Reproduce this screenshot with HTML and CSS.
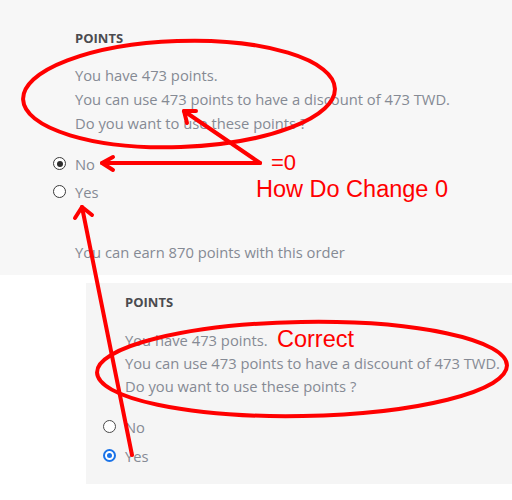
FILE: index.html
```html
<!DOCTYPE html>
<html>
<head>
<meta charset="utf-8">
<link rel="stylesheet" href="styles.css">
</head>
<body>
<div class="page">
  <section class="panel panel-top">
    <h3 class="title">Points</h3>
    <div class="info">
      <p>You have 473 points.</p>
      <p>You can use 473 points to have a discount of 473 TWD.</p>
      <p>Do you want to use these points ?</p>
    </div>
    <div class="choices">
      <label class="choice"><span class="radio radio-dark checked"></span>No</label>
      <label class="choice"><span class="radio radio-dark"></span>Yes</label>
    </div>
    <p class="earn">You can earn 870 points with this order</p>
  </section>

  <section class="panel panel-bottom">
    <h3 class="title">Points</h3>
    <div class="info">
      <p>You have 473 points.</p>
      <p>You can use 473 points to have a discount of 473 TWD.</p>
      <p>Do you want to use these points ?</p>
    </div>
    <div class="choices">
      <label class="choice"><span class="radio radio-blue"></span>No</label>
      <label class="choice"><span class="radio radio-blue checked"></span>Yes</label>
    </div>
  </section>

  <svg class="marks" width="512" height="500" viewBox="0 0 512 500">
    <g fill="none" stroke="#ff0000" stroke-width="4" stroke-linecap="round" stroke-linejoin="round">
      <ellipse cx="179" cy="94" rx="156" ry="53" transform="rotate(-2 179 94)"/>
      <ellipse cx="302" cy="369" rx="205" ry="47" transform="rotate(-1 302 369)"/>
      <path d="M260 163 L102 163"/>
      <path d="M113 157 L102 163 L113 170"/>
      <path d="M260 163 L184 111"/>
      <path d="M196 111 L184 111 L187 123"/>
      <path d="M132 455 L82 207"/>
      <path d="M75 218 L82 207 L92 215"/>
    </g>
    <g class="note">
      <text x="271" y="170" font-size="22">=0</text>
      <text x="256" y="197" font-size="23.5">How Do Change 0</text>
      <text x="277" y="347" font-size="23.5">Correct</text>
    </g>
  </svg>
</div>
</body>
</html>
```

FILE: styles.css
```css
html, body {
  margin: 0;
  padding: 0;
  background: #ffffff;
}

.page {
  position: relative;
  width: 512px;
  height: 500px;
  overflow: hidden;
  font-family: "Open Sans", "DejaVu Sans", sans-serif;
}

.panel {
  box-sizing: border-box;
  display: flex;
  flex-direction: column;
}

.panel-top {
  background: #f7f7f7;
  height: 275px;
  padding: 30px 0 0 75px;
}

.panel-bottom {
  background: #f5f5f5;
  height: 201px;
  margin: 8px 0 0 86px;
  padding: 11px 0 0 39px;
}

.title {
  margin: 0 0 17px;
  font-size: 13px;
  line-height: 16px;
  font-weight: 700;
  text-transform: uppercase;
  color: #4b4b4f;
}

.panel-bottom .title {
  margin-bottom: 19px;
}

.info p {
  margin: 0;
  font-size: 14.75px;
  line-height: 24px;
  color: #858a94;
  white-space: nowrap;
}

.panel-bottom .info p {
  line-height: 23px;
}

.choices {
  display: flex;
  flex-direction: column;
  gap: 4px;
  margin: 17px 0 0 -22px;
}

.panel-bottom .choices {
  margin-top: 17px;
  gap: 5px;
}

.choice {
  display: flex;
  align-items: center;
  gap: 9px;
  font-size: 14.75px;
  line-height: 24px;
  color: #858a94;
}

.radio {
  box-sizing: border-box;
  width: 13px;
  height: 13px;
  border-radius: 50%;
  background: #ffffff;
  display: flex;
  align-items: center;
  justify-content: center;
  margin-top: -1px;
}

.radio-dark {
  border: 1px solid #3a3a3a;
}

.radio-dark.checked::after {
  content: "";
  width: 6px;
  height: 6px;
  border-radius: 50%;
  background: #2e2e2e;
}

.radio-blue {
  border: 1.5px solid #4a4a4a;
}

.radio-blue.checked {
  border: 2px solid #1a73e8;
}

.radio-blue.checked::after {
  content: "";
  width: 5px;
  height: 5px;
  border-radius: 50%;
  background: #1a73e8;
}

.earn {
  margin: 36px 0 0;
  font-size: 14.75px;
  line-height: 24px;
  color: #858a94;
}

.marks {
  position: absolute;
  left: 0;
  top: 0;
  pointer-events: none;
}

.note {
  fill: #ff0000;
  font-family: "Liberation Sans", Arial, sans-serif;
}
```
